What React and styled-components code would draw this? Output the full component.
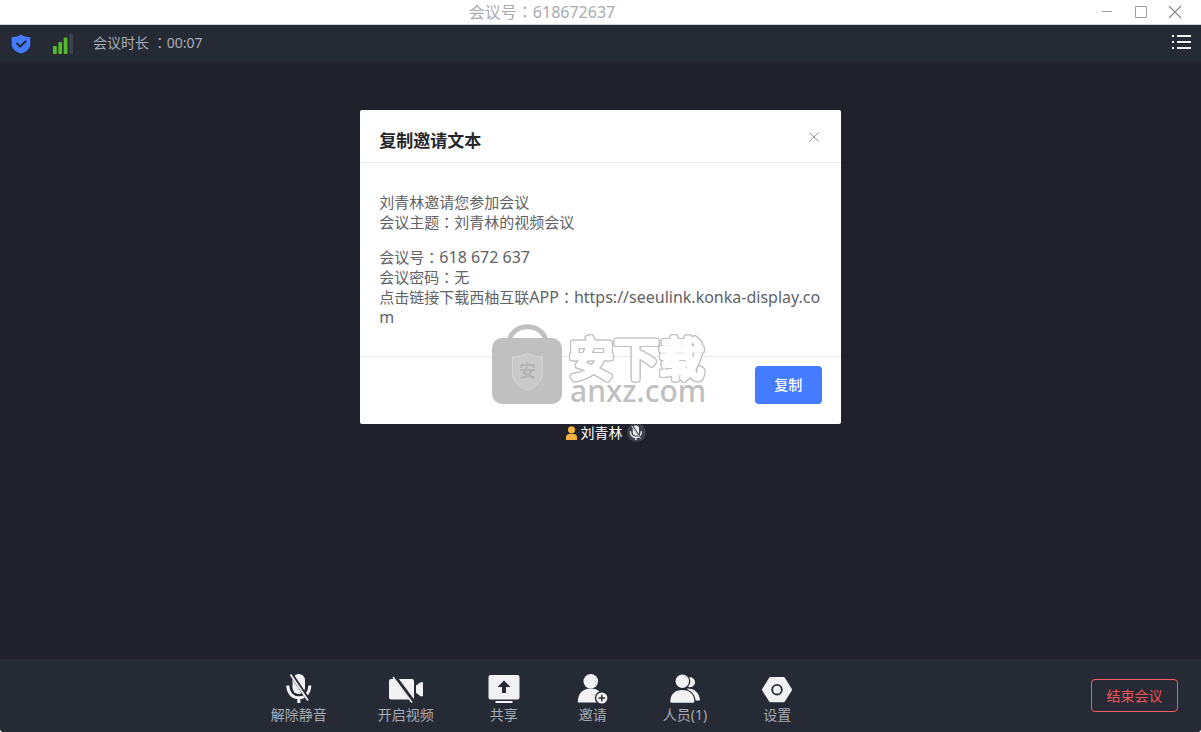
import styled, { createGlobalStyle } from "styled-components";

const tools = [
  { label: "解除静音", icon: MicOffIcon },
  { label: "开启视频", icon: CameraOffIcon },
  { label: "共享", icon: ShareIcon },
  { label: "邀请", icon: InviteIcon },
  { label: "人员(1)", icon: PeopleIcon },
  { label: "设置", icon: SettingsIcon },
];

const App = () => {
  return (
    <Page>
      <GlobalStyle />
      <TitleBar>
        <WindowTitle>
          会议号<Colon>：</Colon>618672637
        </WindowTitle>
        <WindowControls>
          <WindowButton aria-label="最小化">
            <svg width="14" height="14" fill="none" stroke="#9b9ea6">
              <path d="M2 6.500h10" />
            </svg>
          </WindowButton>
          <WindowButton aria-label="最大化">
            <svg width="14" height="14" fill="none" stroke="#9b9ea6">
              <path d="M1.500 1.500h11v11h-11z" />
            </svg>
          </WindowButton>
          <WindowButton aria-label="关闭">
            <svg width="14" height="14" fill="none" stroke="#85888f" strokeWidth="1.2">
              <path d="M1 1l12 12M13 1L1 13" />
            </svg>
          </WindowButton>
        </WindowControls>
      </TitleBar>

      <StatusBar>
        <ShieldIcon />
        <SignalIcon />
        <Duration>
          会议时长 <Colon>：</Colon>00:07
        </Duration>
        <MenuButton aria-label="列表">
          <svg width="20" height="16" fill="#f2f3f5">
            <path d="M0 1h2v2H0zM0 7h2v2H0zM0 13h2v2H0z" />
            <path d="M5 1h14v2H5zM5 7h14v2H5zM5 13h14v2H5z" />
          </svg>
        </MenuButton>
      </StatusBar>

      <Stage>
        <Participant>
          <svg width="11" height="14" fill="#f5b341">
            <circle cx="5.500" cy="3.800" r="3.600" />
            <path d="M0 14v-2.500Q0 8 3.500 8h4Q11 8 11 11.500V14z" />
          </svg>
          <span>刘青林</span>
          <MicBadge>
            <MicOffIcon size={16} cut="#3b404d" />
          </MicBadge>
        </Participant>
      </Stage>

      <BottomBar>
        <Tools>
          {tools.map(({ label, icon: Icon }) => (
            <ToolButton key={label}>
              <Icon />
              <span>{label}</span>
            </ToolButton>
          ))}
        </Tools>
        <EndButton>结束会议</EndButton>
      </BottomBar>

      <Overlay>
        <Dialog role="dialog" aria-labelledby="invite-title">
          <DialogHeader>
            <h2 id="invite-title">复制邀请文本</h2>
            <CloseButton aria-label="关闭">
              <svg width="12" height="12" fill="none" stroke="#909399">
                <path d="M1.500 1.500l9 9M10.500 1.500l-9 9" />
              </svg>
            </CloseButton>
          </DialogHeader>
          <DialogBody>
            <p>
              刘青林邀请您参加会议
              <br />
              会议主题<Colon>：</Colon>刘青林的视频会议
            </p>
            <p>
              会议号<Colon>：</Colon>
              <Latin>618 672 637</Latin>
              <br />
              会议密码<Colon>：</Colon>无
              <br />
              点击链接下载西柚互联<Latin>APP</Latin>
              <Colon>：</Colon>
              <Latin>https://seeulink.konka-display.com</Latin>
            </p>
          </DialogBody>
          <DialogFooter>
            <CopyButton>复制</CopyButton>
          </DialogFooter>
        </Dialog>
      </Overlay>

      <Watermark>
        <BagIcon />
        <Wordmark />
      </Watermark>
    </Page>
  );
};

export default App;

function ShieldIcon() {
  return (
    <svg width="20" height="20" viewBox="0 0 20 20">
      <path
        d="M10 .5C12.500 2.300 15.500 3 19.300 3.200V10c0 4.500-3.500 7.700-9.300 9.500C4.200 17.700.7 14.500.7 10V3.200C4.500 3 7.500 2.300 10 .5z"
        fill="#447bff"
      />
      <path d="M5.500 9l3.700 3.700 6-6" fill="none" stroke="#252a34" strokeWidth="2" />
    </svg>
  );
}

function SignalIcon() {
  return (
    <svg width="22" height="21" viewBox="0 0 22 21" fill="#55b92a">
      <rect x="2" y="13" width="3.800" height="8" rx="1" />
      <rect x="7.300" y="9" width="3.800" height="12" rx="1" />
      <rect x="12.700" y="4.500" width="3.800" height="16.500" rx="1" />
      <rect x="18.200" y=".5" width="3.800" height="20.500" rx="1" fill="#3c424e" />
    </svg>
  );
}

function MicOffIcon({ size = 32, cut = "#252a34" }) {
  return (
    <svg width={size} height={size} viewBox="0 0 32 32">
      <rect x="9.500" y="1" width="12.500" height="20" rx="6.250" fill="#f2f2f4" />
      <path
        d="M4.800 12.500c0 7.500 4.700 12.300 11 12.300s11-4.800 11-12.300M15.800 25v5"
        fill="none"
        stroke="#f2f2f4"
        strokeWidth="3"
      />
      <path d="M8.500 1.500L25.500 27" stroke={cut} strokeWidth="4" />
      <path d="M7.500 1.500L25 27.500" stroke="#f2f2f4" strokeWidth="1.800" />
    </svg>
  );
}

function CameraOffIcon() {
  return (
    <svg width="36" height="32" viewBox="0 0 36 32">
      <rect x="1" y="6" width="25" height="20.500" rx="2" fill="#f2f2f4" />
      <path d="M28 12.500l4.500-3.300h2.500v14h-2.500L28 19.800z" fill="#f2f2f4" />
      <path d="M6.500 3.500L25.500 29" stroke="#252a34" strokeWidth="4" />
      <path d="M5 4L24 29.500" stroke="#f2f2f4" strokeWidth="1.500" />
    </svg>
  );
}

function ShareIcon() {
  return (
    <svg width="32" height="32" viewBox="0 0 32 32" fill="#f2f2f4">
      <rect x=".5" y="2" width="31" height="24.500" rx="2" />
      <rect x="7.500" y="28" width="17" height="2" />
      <path d="M16 7.500l6.500 6.500h-4.500v6h-4v-6H9.500z" fill="#252a34" />
    </svg>
  );
}

function InviteIcon() {
  return (
    <svg width="32" height="32" viewBox="0 0 32 32" fill="#f2f2f4">
      <circle cx="13.800" cy="8.300" r="7.300" />
      <path d="M.8 29.500C.8 21 5 15.500 13.800 15.500S26 21 26 29.500z" />
      <circle cx="24.800" cy="25" r="7" fill="#252a34" />
      <circle cx="24.800" cy="25" r="5.600" />
      <path d="M24.800 21.700v6.600M21.500 25h6.600" stroke="#252a34" strokeWidth="1.500" />
    </svg>
  );
}

function PeopleIcon() {
  return (
    <svg width="32" height="32" viewBox="0 0 32 32" fill="#f2f2f4">
      <circle cx="21" cy="9.300" r="5" />
      <path d="M18 15.500c8 0 12.500 4.500 13 12h-7z" />
      <circle cx="13.300" cy="8.300" r="8" fill="#252a34" />
      <path d="M0 30.500C0 21 5 15.800 13.300 15.800S26.800 21 26.800 30.500z" fill="#252a34" />
      <circle cx="13.300" cy="8.300" r="6.700" />
      <path d="M1.300 28.500c0-7 4.500-11.500 12-11.500s12 4.500 12 11.500q0 1.200-1.200 1.200H2.500q-1.200 0-1.200-1.200z" />
    </svg>
  );
}

function SettingsIcon() {
  return (
    <svg width="32" height="32" viewBox="0 0 32 32">
      <path
        d="M9.500 4h13q1 0 1.500 1l6.700 10.700q.5 1 0 2L24 28.300q-.5 1-1.500 1h-13q-1 0-1.500-1L1.300 17.700q-.5-1 0-2L8 5q.5-1 1.500-1z"
        fill="#f2f2f4"
      />
      <circle cx="16" cy="16.700" r="4.800" fill="none" stroke="#252a34" strokeWidth="1.800" />
    </svg>
  );
}

function BagIcon() {
  return (
    <svg width="71" height="82" viewBox="0 0 71 82">
      <path d="M17 16a19 17 0 0 1 37 0" fill="none" stroke="#c0c0c0" strokeWidth="5" />
      <rect x="0" y="14" width="70" height="66" rx="10" fill="#c0c0c0" />
      <path
        d="M35.500 29c4 2.500 9 4 15 4v16c0 8-6 13.500-15 17.500-9-4-15-9.500-15-17.500V33c6 0 11-1.500 15-4z"
        fill="#cacaca"
        stroke="#d6d6d6"
      />
      <text x="35.500" y="53" textAnchor="middle" fontSize="17" fontWeight="700" fill="#b4b4b4">
        安
      </text>
    </svg>
  );
}

function Wordmark() {
  return (
    <svg width="142" height="82" viewBox="0 0 142 82">
      <OutlinedText x="2" y="52">
        安下载
      </OutlinedText>
      <text x="3" y="78" fontSize="30" fontWeight="500" fill="#c0c0c0">
        anxz.com
      </text>
    </svg>
  );
}

const GlobalStyle = createGlobalStyle`
  * {
    box-sizing: border-box;
  }
  body {
    margin: 0;
    background: #fff;
  }
  body, button {
    font-family: "Noto Sans", "Noto Sans CJK SC", sans-serif;
    font-size: 14px;
  }
  button {
    padding: 0;
    border: none;
    background: none;
    cursor: pointer;
  }
  svg {
    display: block;
    flex: none;
  }
`;

const Page = styled.div`
  display: flex;
  flex-direction: column;
  min-height: 100vh;
  background: #21212b;
  border-radius: 0 0 4px 4px;
  overflow: hidden;
`;

const Colon = styled.span`
  font-family: "Noto Sans CJK TC", sans-serif;
  line-height: 1;
`;

const Latin = styled.span`
  font-size: 16px;
  line-height: 1;
`;

const TitleBar = styled.header`
  display: flex;
  height: 25px;
  background: #fff;
  border-bottom: 1px solid #c9d3da;
`;

const WindowTitle = styled.div`
  flex: 1;
  text-align: center;
  font-size: 16px;
  line-height: 24px;
  color: #a9abb3;
`;

const WindowControls = styled.div`
  display: flex;
  padding: 0 9px 0 6px;
`;

const WindowButton = styled.button`
  display: flex;
  align-items: center;
  justify-content: center;
  width: 34px;
`;

const StatusBar = styled.div`
  display: flex;
  align-items: center;
  height: 37px;
  padding: 0 9px 0 11px;
  gap: 20px;
  background: #252a34;
`;

const Duration = styled.div`
  flex: 1;
  padding-bottom: 2px;
  line-height: 20px;
  color: #a9adb8;
`;

const MenuButton = styled.button`
  padding-bottom: 4px;
`;

const Stage = styled.main`
  flex: 1;
  display: flex;
  align-items: center;
  justify-content: center;
  padding: 144px 0 0 10px;
`;

const Participant = styled.div`
  display: flex;
  align-items: center;
  gap: 4px;
  line-height: 20px;
  color: #fff;
`;

const MicBadge = styled.div`
  display: flex;
  align-items: center;
  justify-content: center;
  width: 19px;
  height: 19px;
  border-radius: 50%;
  background: #3b404d;
`;

const BottomBar = styled.footer`
  display: flex;
  align-items: center;
  padding-right: 23px;
  background: #252a34;
`;

const Tools = styled.nav`
  flex: 1;
  display: flex;
  justify-content: center;
  gap: 51px;
  padding: 14px 0 7px;
`;

const ToolButton = styled.button`
  display: flex;
  flex-direction: column;
  align-items: center;
  min-width: 38px;
  line-height: 20px;
  color: #a5aab6;
`;

const EndButton = styled.button`
  width: 87px;
  height: 33px;
  margin-left: 24px;
  padding-bottom: 2px;
  border: 1px solid #ee5c62;
  border-radius: 4px;
  color: #ee5258;
`;

const Overlay = styled.div`
  position: fixed;
  inset: 0;
  display: flex;
  align-items: flex-start;
  justify-content: center;
  padding-top: 15vh;
`;

const Dialog = styled.section`
  width: 40%;
  background: #fff;
  border-radius: 2px;
`;

const DialogHeader = styled.div`
  display: flex;
  justify-content: space-between;
  padding: 19px 19px 9px;
  border-bottom: 1px solid #e8e9eb;
  h2 {
    margin: 0;
    font-size: 17px;
    line-height: 24px;
    font-weight: 700;
    color: #24262b;
  }
`;

const CloseButton = styled.button`
  align-self: flex-start;
  padding: 2px;
`;

const DialogBody = styled.div`
  padding: 29px 19px;
  font-size: 15px;
  line-height: 20px;
  color: #606266;
  word-break: break-all;
  p {
    margin: 0;
  }
  p + p {
    margin-top: 15px;
  }
`;

const DialogFooter = styled.div`
  display: flex;
  justify-content: flex-end;
  padding: 9px 19px 20px;
  border-top: 1px solid #e8e9eb;
`;

const CopyButton = styled.button`
  width: 67px;
  height: 38px;
  padding-bottom: 2px;
  border-radius: 4px;
  background: #447bff;
  color: #fff;
  font-weight: 500;
`;

const Watermark = styled.div`
  position: fixed;
  inset: 0;
  display: flex;
  align-items: center;
  justify-content: center;
  gap: 4px;
  padding-bottom: 2px;
  pointer-events: none;
`;

const OutlinedText = styled.text`
  font-size: 45px;
  fill: #fff;
  stroke: #fff;
  stroke-width: 4px;
  stroke-linejoin: round;
  filter: drop-shadow(1px 0 #c0c0c0) drop-shadow(-1px 0 #c0c0c0)
    drop-shadow(0 1px #c0c0c0) drop-shadow(0 -1px #c0c0c0);
`;
